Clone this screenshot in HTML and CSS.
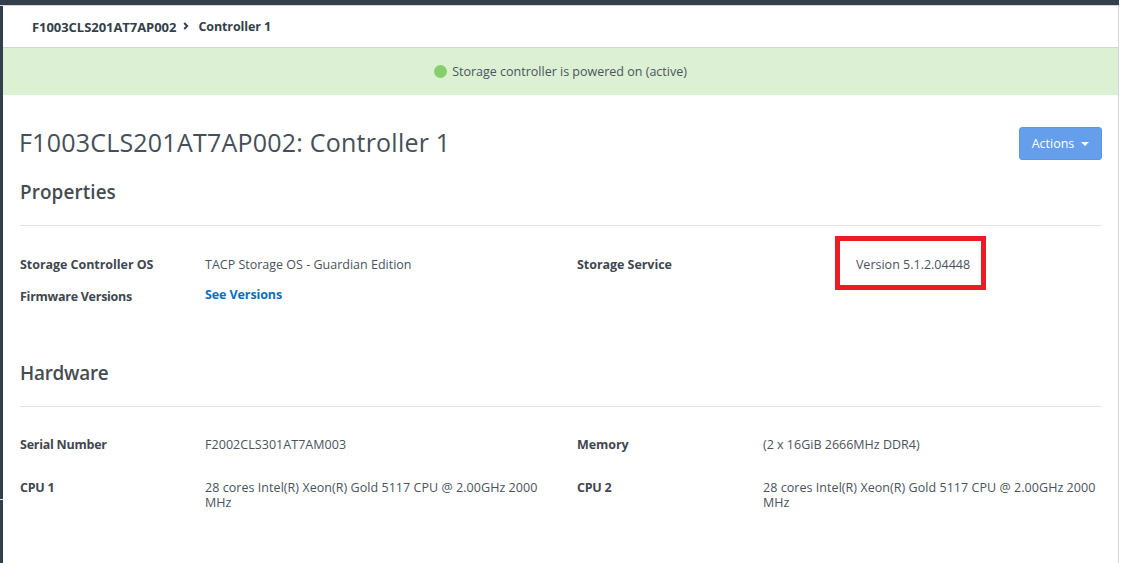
FILE: index.html
```html
<!DOCTYPE html>
<html lang="en">
<head>
<meta charset="utf-8">
<title>Controller 1</title>
<link rel="stylesheet" href="styles.css">
</head>
<body>
<div class="topbar"></div>
<div class="shell">
  <main class="content">
    <nav class="crumbs">
      <span class="crumb-a">F1003CLS201AT7AP002</span>
      <svg class="chev" width="6" height="8" viewBox="0 0 6 8"><path d="M1.2 1 L4.2 4 L1.2 7" fill="none" stroke="#333f4a" stroke-width="1.9"/></svg>
      <span class="crumb-b">Controller 1</span>
    </nav>
    <div class="status"><span class="dot"></span><span>Storage controller is powered on (active)</span></div>
    <div class="body">
      <header class="title-row">
        <h1>F1003CLS201AT7AP002: Controller 1</h1>
        <button class="actions">Actions<span class="caret"></span></button>
      </header>
      <h2 class="h-prop">Properties</h2>
      <div class="grid grid-prop">
        <div class="k">Storage Controller OS</div>
        <div class="v">TACP Storage OS - Guardian Edition</div>
        <div class="k">Storage Service</div>
        <div class="v v-boxed"><span class="redbox">Version 5.1.2.04448</span></div>
        <div class="k k-fw">Firmware Versions</div>
        <div class="v"><a class="link" href="#">See Versions</a></div>
      </div>
      <h2 class="h-hw">Hardware</h2>
      <div class="grid grid-hw">
        <div class="k k-tight">Serial Number</div>
        <div class="v v-wide">F2002CLS301AT7AM003</div>
        <div class="k">Memory</div>
        <div class="v">(2 x 16GiB 2666MHz DDR4)</div>
        <div class="k k-tight">CPU 1</div>
        <div class="v v-wide v-narrow">28 cores Intel(R) Xeon(R) Gold 5117 CPU @ 2.00GHz 2000 MHz</div>
        <div class="k k-tight">CPU 2</div>
        <div class="v v-wide">28 cores Intel(R) Xeon(R) Gold 5117 CPU @ 2.00GHz 2000 MHz</div>
      </div>
    </div>
  </main>
</div>
</body>
</html>
```
FILE: styles.css
```css
* { box-sizing: border-box; }
html, body { margin: 0; padding: 0; height: 100%; background: #fff; overflow: hidden; }
body { font-family: "Open Sans", "Noto Sans", sans-serif; font-size: 12.5px; color: #3c4650; width: 1119px; }
.topbar { height: 6px; background: #333f4a; border-bottom: 1px solid #d6d6d6; }
.shell { position: relative; border-left: 3px solid #333f4a; border-right: 1px solid #d6d6d6; height: 557px; }
.shell::before { content: ""; position: absolute; left: -3px; top: 493px; width: 3px; height: 1px; background: #e8e8e8; }
.crumbs { height: 42px; display: flex; align-items: center; padding-left: 29px; font-weight: 700; color: #333f4a; border-bottom: 1px solid #d4d4d4; }
.crumb-a { font-size: 13px; letter-spacing: -0.05px; }
.chev { margin: 0 9px 0 7px; position: relative; top: -1px; }
.crumb-b { font-size: 12.5px; letter-spacing: -0.1px; }
.status { height: 47px; background: #dcf0d3; display: flex; align-items: center; justify-content: center; gap: 5px; color: #4a5560; }
.dot { width: 13px; height: 13px; border-radius: 50%; background: #86cf6e; }
.body { padding: 32px 16px 0 17px; }
.title-row { display: flex; justify-content: space-between; align-items: center; height: 32px; }
h1 { margin: 0 0 3px -1px; font-size: 25px; font-weight: 400; color: #454f59; letter-spacing: 0.22px; }
.actions { width: 83px; height: 33px; background: #659fec; border: 1px solid #5b95e6; border-radius: 3px; color: #fff; font: 12.5px "Open Sans", sans-serif; display: flex; align-items: center; justify-content: center; gap: 7px; padding: 0; }
.caret { width: 0; height: 0; border-left: 4px solid transparent; border-right: 4px solid transparent; border-top: 4px solid #fff; margin-top: 2px; }
h2 { margin: 0; font-size: 18.9px; font-weight: 600; color: #454b50; }
.h-prop { margin-top: 20px; padding-bottom: 20px; border-bottom: 1px solid #e4e4e4; letter-spacing: 0.1px; }
.h-hw { margin-top: 58px; padding-bottom: 20px; border-bottom: 1px solid #e4e4e4; letter-spacing: -0.25px; }
.grid { display: grid; grid-template-columns: 185px 372px 186px 1fr; line-height: 15px; }
.grid-prop { padding-top: 31px; row-gap: 15px; }
.grid-hw { padding-top: 30px; row-gap: 28px; }
.k { font-weight: 700; color: #3f4750; letter-spacing: -0.05px; }
.k-tight { letter-spacing: -0.25px; }
.v { color: #4a535c; }
.v-wide { letter-spacing: 0.05px; }
.v-narrow { padding-right: 20px; }
.k-fw { position: relative; top: 2px; letter-spacing: -0.27px; }
.link { color: #0a6ebd; font-weight: 700; text-decoration: none; letter-spacing: -0.1px; }
.v-boxed { position: relative; }
.redbox { position: absolute; left: 72px; top: -21px; width: 151px; height: 54px; padding: 2px 0 0 5px; border: 5px solid #ed1c24; display: flex; align-items: center; justify-content: center; }
```
